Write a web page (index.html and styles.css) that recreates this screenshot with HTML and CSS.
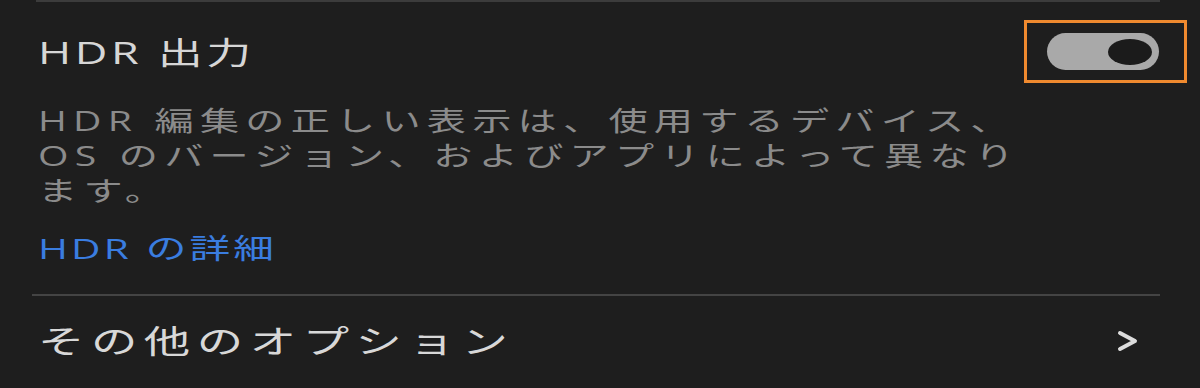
FILE: index.html
```html
<!DOCTYPE html>
<html lang="ja">
<head>
	<meta charset="utf-8">
	<title>HDR 出力</title>
	<link rel="stylesheet" href="styles.css">
</head>
<body>
	<div class="panel">
		<div class="rule rule-top"></div>

		<div class="setting">
			<span class="setting-title wide">HDR 出力</span>
			<div class="highlight">
				<div class="toggle"><span class="knob"></span></div>
			</div>
		</div>

		<p class="setting-desc wide">HDR 編集の正しい表示は、使用するデバイス、OS のバージョン、およびアプリによって異なります。</p>
		<a class="setting-link wide" href="#">HDR の詳細</a>

		<div class="rule rule-bottom"></div>

		<div class="nav-row">
			<span class="nav-label wide">その他のオプション</span>
			<svg class="chevron" width="24" height="24" viewBox="0 0 24 24">
				<polyline points="4,4 19,12 4,20" fill="none" stroke="#dcdcdc" stroke-width="4" stroke-linecap="round" stroke-linejoin="round"/>
			</svg>
		</div>
	</div>
</body>
</html>
```

FILE: styles.css
```css
body {
	margin: 0;
	background: #1e1e1e;
	font-family: "Open Sans", "Noto Sans CJK JP", sans-serif;
}

.panel {
	padding: 0 40px 0 38px;
}

/* the screen is shown stretched sideways */
.wide {
	display: inline-block;
	transform: scaleX(1.45);
	transform-origin: left top;
}

.rule {
	height: 2px;
	background: #3c3c3c;
}
.rule-top {
	margin-left: -2px;
}
.rule-bottom {
	margin-top: 26px;
	margin-left: -6px;
	background: #444444;
}

/* title row with the switch */
.setting {
	display: flex;
	align-items: center;
	justify-content: space-between;
	padding-top: 18px;
}
.setting-title {
	font-size: 31px;
	line-height: 40px;
	letter-spacing: 2.5px;
	color: #d6d6d6;
}
.highlight {
	border: 3px solid #f08a2f;
	padding: 10px 25px 10px 20px;
	margin-right: -27px;
}
.toggle {
	width: 112px;
	height: 37px;
	box-sizing: border-box;
	padding-right: 7px;
	border-radius: 19px;
	background: #a9a9a9;
	display: flex;
	align-items: center;
	justify-content: flex-end;
}
.knob {
	width: 44px;
	height: 26px;
	border-radius: 50%;
	background: #1b1b1b;
}

.setting-desc {
	display: block;
	margin: 20px 0 0;
	width: 686px;
	font-size: 27px;
	line-height: 35px;
	letter-spacing: 4.3px;
	color: #8b8b8b;
}
.setting-link {
	margin-top: 20px;
	font-size: 28px;
	line-height: 40px;
	letter-spacing: 2.2px;
	color: #3a7de0;
	text-decoration: none;
}

/* more options */
.nav-row {
	display: flex;
	align-items: center;
	justify-content: space-between;
	margin-top: 25px;
}
.nav-label {
	font-size: 32px;
	line-height: 40px;
	letter-spacing: 4.5px;
	color: #d8d8d8;
}
.chevron {
	margin-right: 20px;
}
```
